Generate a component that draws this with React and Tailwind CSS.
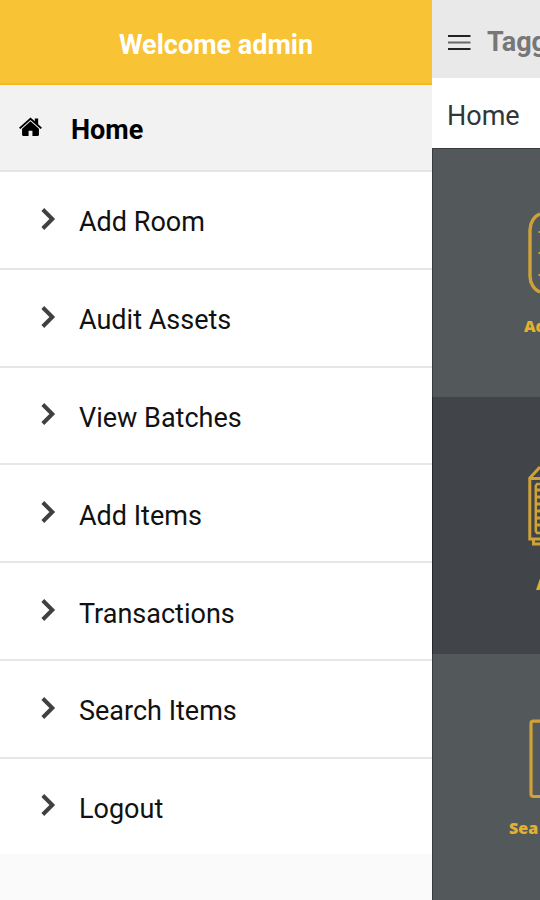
const items = [
  "Add Room",
  "Audit Assets",
  "View Batches",
  "Add Items",
  "Transactions",
  "Search Items",
  "Logout",
];

function HomeIcon() {
  return (
    <svg width="23" height="20" viewBox="0 0 24 20" className="shrink-0" fill="#000">
      <path d="M12 0 L16.5 3.9 V1 H20 V7 L24 10.8 L22.6 12.2 L12 2.8 L1.4 12.2 L0 10.8 Z" />
      <path d="M12 4 L20.8 11.8 V18 Q20.8 19.5 19.2 19.5 H14 V13.8 H10 V19.5 H4.8 Q3.2 19.5 3.2 18 V11.8 Z" />
    </svg>
  );
}

function Chevron() {
  return (
    <svg width="16" height="22" viewBox="0 0 16 22" className="shrink-0" fill="none" stroke="#404040" strokeWidth="4">
      <path d="M2.8 1.5 L12.3 11 L2.8 20.5" />
    </svg>
  );
}

function MenuIcon() {
  return (
    <svg width="24" height="16" viewBox="0 0 24 16" className="shrink-0" strokeWidth="2">
      <path d="M1 2 H23.5 M1 15 H23.5" stroke="#222" />
      <path d="M1 8.5 H23.5" stroke="#666" />
    </svg>
  );
}

function RoomIcon() {
  return (
    <svg width="12" height="82" viewBox="0 0 12 82" fill="none" stroke="#cfa238" strokeWidth="3.4">
      <path d="M12 2 C6 4 2 11 2 18 V64 C2 71 6 78 12 80" />
      <path d="M10.5 20 H12 M10.5 41 H12 M10.5 63 H12" strokeWidth="2" />
    </svg>
  );
}

function CabinetIcon() {
  return (
    <svg width="12" height="82" viewBox="0 0 12 82" fill="none" stroke="#cfa238" strokeWidth="3">
      <path d="M12 2 L1.8 13 V74 H12 M2 13.5 H12 M5.5 75 V79 H12" />
      <path d="M12 19 H9 L7.8 21 V66 L9 68 H12" strokeWidth="2.5" />
      <path d="M9 25 H12 M9 32 H12 M9 39 H12 M9 46 H12 M9 53 H12 M9 60 H12" strokeWidth="3.2" />
    </svg>
  );
}

function SearchIcon() {
  return (
    <svg width="11" height="80" viewBox="0 0 11 80" fill="none" stroke="#cfa238" strokeWidth="3.2">
      <path d="M11 2.2 H4.5 Q2 2.2 2 4.7 V75 Q2 77.5 4.5 77.5 H11" />
    </svg>
  );
}

export default function App() {
  return (
    <div className="flex h-[900px] w-[540px] overflow-hidden bg-white font-['Roboto',sans-serif]">
      {/* drawer */}
      <aside className="flex w-[432px] shrink-0 flex-col bg-[#fafafa]">
        <header className="flex h-[85px] items-center justify-center border-b-2 border-[#f5bd1c] bg-[#f8c335] pt-[6px]">
          <h1 className="text-[27px] leading-8 font-bold whitespace-nowrap text-white">Welcome admin</h1>
        </header>
        <div className="flex h-[87px] items-center border-b-2 border-[#e4e4e4] bg-[#f2f2f2] pl-[19px]">
          <div className="mb-[2px] flex">
            <HomeIcon />
          </div>
          <span className="ml-[29px] pt-[5px] text-[27px] leading-8 font-bold text-black">Home</span>
        </div>
        <nav>
          {items.map((item) => (
            <div
              key={item}
              className="flex h-[97.8px] items-center border-b-2 border-[#e6e6e6] bg-white pl-10 last:h-[95px] last:border-b-0"
            >
              <div className="mb-[2px] flex">
                <Chevron />
              </div>
              <span className="ml-[23px] pt-[5px] text-[27px] leading-8 whitespace-nowrap text-[#111]">{item}</span>
            </div>
          ))}
        </nav>
      </aside>

      {/* page behind the drawer */}
      <main className="flex min-w-0 flex-1 flex-col overflow-hidden">
        <div className="flex h-[78px] shrink-0 items-center bg-[#e9e9e9] pt-[6px] pl-[15px]">
          <MenuIcon />
          <span className="ml-4 text-[27px] leading-8 font-bold text-[#777]">Tagg</span>
        </div>
        <div className="flex h-[70px] shrink-0 items-center bg-white pt-[5px] pl-[15px]">
          <span className="text-[27px] leading-8 text-[#30363a]">Home</span>
        </div>
        <section className="flex h-[249px] shrink-0 flex-col items-end border-t border-l border-[#383c3e] bg-[#53585b] pt-[63px]">
          <RoomIcon />
          <span className="mt-5 w-4 text-[16px] leading-6 font-extrabold text-[#e3b02f] font-['Open_Sans',sans-serif]">Ad</span>
        </section>
        <section className="flex h-[257px] shrink-0 flex-col items-end border-l border-[#25282b] bg-[#414448] pt-[68px]">
          <CabinetIcon />
          <span className="mt-[25px] w-1 text-[16px] leading-6 font-extrabold text-[#e3b02f] font-['Open_Sans',sans-serif]">A</span>
        </section>
        <section className="flex flex-1 flex-col items-end border-l border-[#383c3e] bg-[#53585b] pt-[65px]">
          <SearchIcon />
          <span className="mt-[17px] w-[31px] text-[16px] leading-6 font-extrabold text-[#e3b02f] font-['Open_Sans',sans-serif]">Sea</span>
        </section>
      </main>
    </div>
  );
}
